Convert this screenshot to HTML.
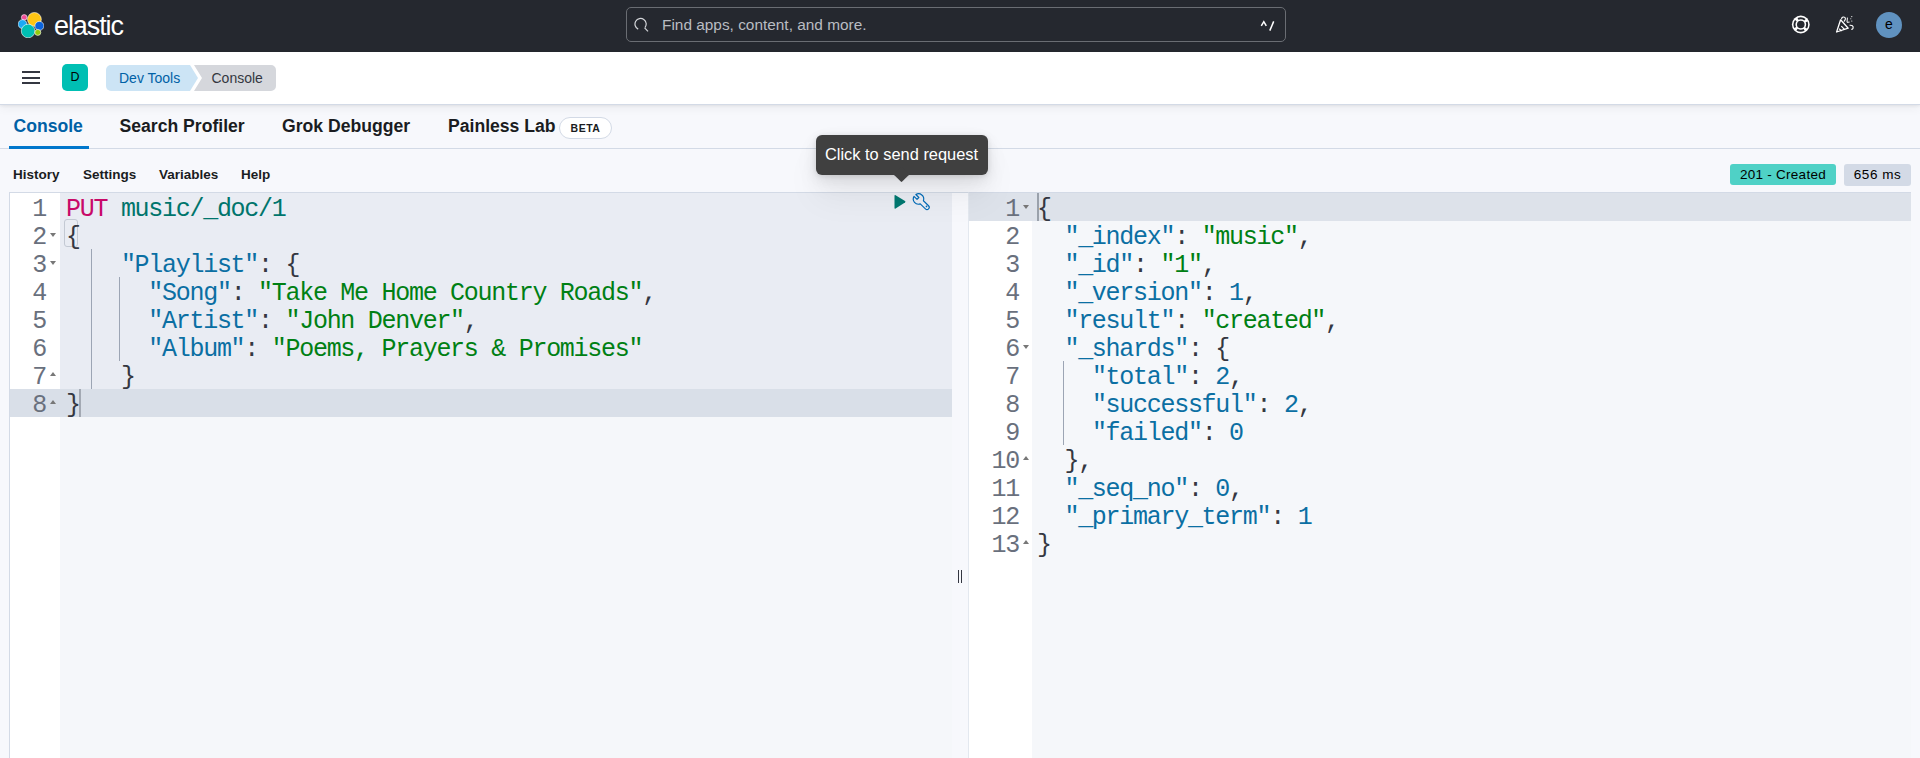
<!DOCTYPE html>
<html><head><meta charset="utf-8">
<style>
*{box-sizing:border-box;margin:0;padding:0}
html,body{width:1920px;height:758px;overflow:hidden;background:#f7f8fc;font-family:"Liberation Sans",sans-serif;}
.abs{position:absolute}
#hdr{position:absolute;left:0;top:0;width:1920px;height:52px;background:#25282f}
#bc{position:absolute;left:0;top:52px;width:1920px;height:53px;background:#fff;border-bottom:1px solid #d3dae6;box-shadow:0 1px 3px rgba(0,0,0,.07),0 4px 9px rgba(0,0,0,.045)}
.txt{position:absolute;white-space:pre;line-height:1}
.mono{font-family:"Liberation Mono",monospace}
.ed{position:absolute;overflow:hidden}
.ln{position:absolute;left:0;height:28px;white-space:pre;font-family:"Liberation Mono",monospace;font-size:25px;letter-spacing:-1.285px;line-height:28px}
.gn{position:absolute;height:28px;text-align:right;font-family:"Liberation Mono",monospace;font-size:25px;letter-spacing:-1.285px;line-height:28px;color:#69707d}
.k{color:#0b6fa3}.s{color:#008013}.p{color:#343741}.m{color:#c80a68}.u{color:#00756c}.n{color:#0b6fa3}
.fold{position:absolute;width:0;height:0;border-left:3px solid transparent;border-right:3px solid transparent}
.fd{border-top:4px solid #777}
.fu{border-bottom:4px solid #777}
</style></head><body>

<!-- HEADER -->
<div id="hdr">
  <svg class="abs" style="left:18px;top:12px" width="26" height="26" viewBox="0 0 26 26">
    <circle cx="16.4" cy="7.4" r="6.9" fill="#fec514" stroke="#fff" stroke-width="0.6"/>
    <circle cx="6.2" cy="5.4" r="2.8" fill="#f04e98" stroke="#fff" stroke-width="0.6"/>
    <circle cx="4.5" cy="12.1" r="4.4" fill="#1ba9f5" stroke="#fff" stroke-width="0.6"/>
    <circle cx="21.4" cy="13.9" r="4.5" fill="#0b64dd" stroke="#fff" stroke-width="0.6"/>
    <circle cx="10.1" cy="19" r="6.8" fill="#00bfb3" stroke="#fff" stroke-width="0.6"/>
    <circle cx="19.8" cy="20.4" r="3" fill="#93c90e" stroke="#fff" stroke-width="0.6"/>
  </svg>
  <div class="txt" style="left:54px;top:12.6px;font-size:27px;color:#fff;letter-spacing:-1.1px">elastic</div>

  <div class="abs" style="left:626px;top:7px;width:660px;height:35px;border:1px solid #6a6d73;border-radius:5px"></div>
  <svg class="abs" style="left:634px;top:17px" width="16" height="16" viewBox="0 0 16 16">
    <path d="M4.2 12.1 A5.6 5.6 0 1 1 10.9 10.6" fill="none" stroke="#d4d6da" stroke-width="1.2"/>
    <line x1="10.6" y1="10.9" x2="14" y2="14.3" stroke="#d4d6da" stroke-width="1.2"/>
  </svg>
  <div class="txt" style="left:662px;top:16.5px;font-size:15.4px;color:#b9bcc2">Find apps, content, and more.</div>
  <svg class="abs" style="left:1258px;top:18px" width="20" height="16" viewBox="0 0 20 16">
    <path d="M3.3 7.8 L5.8 3.6 L8.3 7.8" fill="none" stroke="#fff" stroke-width="1.5" stroke-linejoin="miter"/>
    <path d="M11.8 12.6 L15.7 3.4" stroke="#fff" stroke-width="1.5"/>
  </svg>

  <svg class="abs" style="left:1791px;top:15px" width="20" height="20" viewBox="0 0 20 20">
    <circle cx="9.8" cy="9.5" r="8.9" fill="#fff"/>
    <circle cx="9.8" cy="9.5" r="3.8" fill="#25282f"/>
    <circle cx="9.8" cy="9.5" r="6.35" fill="none" stroke="#25282f" stroke-width="2" stroke-dasharray="7.4 2.57" stroke-dashoffset="3.7"/>
    <circle cx="9.8" cy="9.5" r="7.7" fill="#fff" fill-opacity="0" />
  </svg>
  <svg class="abs" style="left:1835px;top:15px" width="20" height="20" viewBox="0 0 20 20">
    <path d="M1.6 17 L5.6 4.8 L13.2 13.2 Z" fill="none" stroke="#fff" stroke-width="1.3" stroke-linejoin="round"/>
    <path d="M4.2 13.8 L6.6 16 M6.3 11.2 L9.5 14.4" stroke="#fff" stroke-width="1.2"/>
    <path d="M6.6 4.3 C6.4 1.5 10.4 1.3 10.4 3.8 C10.4 5 9.4 5.4 9.1 6.6" fill="none" stroke="#fff" stroke-width="1.1"/>
    <path d="M14.6 10.4 C16.8 9.8 18.6 11.2 18.1 13 C17.8 14.1 16.9 14.4 16.3 14.3" fill="none" stroke="#fff" stroke-width="1.1"/>
    <path d="M12.4 2.6 L12 7.3 L14.6 7.1" fill="none" stroke="#fff" stroke-width="1"/>
    <circle cx="16.8" cy="1.6" r="0.6" fill="#fff"/><circle cx="15.8" cy="3.8" r="0.5" fill="#fff"/><circle cx="16.8" cy="6" r="0.6" fill="#fff"/>
  </svg>
  <div class="abs" style="left:1876px;top:12px;width:26px;height:26px;border-radius:50%;background:#6092c0"></div>
  <div class="txt" style="left:1876px;top:17px;width:26px;text-align:center;font-size:14px;color:#000">e</div>
</div>

<!-- BREADCRUMB BAR -->
<div id="bc">
  <div class="abs" style="left:22px;top:19px;width:18px;height:2px;background:#343741"></div>
  <div class="abs" style="left:22px;top:25px;width:18px;height:2px;background:#343741"></div>
  <div class="abs" style="left:22px;top:30px;width:18px;height:2px;background:#343741"></div>
  <div class="abs" style="left:62px;top:12px;width:26px;height:27px;border-radius:5px;background:#00bfb3"></div>
  <div class="txt" style="left:62px;top:19px;width:26px;text-align:center;font-size:12.5px;color:#000">D</div>
  <svg class="abs" style="left:106px;top:13px" width="172" height="26" viewBox="0 0 172 26">
    <path d="M5 0 H84 L92 13 L84 26 H5 A5 5 0 0 1 0 21 V5 A5 5 0 0 1 5 0 Z" fill="#cce4f5"/>
    <path d="M88 0 H165 A5 5 0 0 1 170 5 V21 A5 5 0 0 1 165 26 H88 L96 13 Z" fill="#d5d7dc"/>
  </svg>
  <div class="txt" style="left:119px;top:19px;font-size:14px;color:#0061a6">Dev Tools</div>
  <div class="txt" style="left:211.5px;top:19px;font-size:14px;color:#343741">Console</div>
</div>

<!-- TABS -->
<div class="abs" style="left:0;top:148px;width:1920px;height:1px;background:#d3dae6"></div>
<div class="txt" style="left:13.5px;top:118px;font-size:17.6px;font-weight:bold;color:#0061a6">Console</div>
<div class="abs" style="left:9px;top:146px;width:80px;height:3px;background:#0077cc"></div>
<div class="txt" style="left:119.5px;top:118px;font-size:17.6px;font-weight:bold;color:#1a1c21">Search Profiler</div>
<div class="txt" style="left:282px;top:118px;font-size:17.6px;font-weight:bold;color:#1a1c21">Grok Debugger</div>
<div class="txt" style="left:448px;top:118px;font-size:17.6px;font-weight:bold;color:#1a1c21">Painless Lab</div>
<div class="abs" style="left:559px;top:117px;width:53px;height:22px;border:1px solid #d3dae6;border-radius:11px;background:#fff"></div>
<div class="txt" style="left:559px;top:123px;width:53px;text-align:center;font-size:10.5px;font-weight:bold;color:#1a1c21;letter-spacing:0.5px">BETA</div>

<!-- TOOLBAR -->
<div class="txt" style="left:13px;top:168px;font-size:13.5px;font-weight:bold;color:#1a1c21">History</div>
<div class="txt" style="left:83px;top:168px;font-size:13.5px;font-weight:bold;color:#1a1c21">Settings</div>
<div class="txt" style="left:159px;top:168px;font-size:13.5px;font-weight:bold;color:#1a1c21">Variables</div>
<div class="txt" style="left:241px;top:168px;font-size:13.5px;font-weight:bold;color:#1a1c21">Help</div>

<div class="abs" style="left:1730px;top:164px;width:106px;height:21px;border-radius:3px;background:#4fd1c6"></div>
<div class="txt" style="left:1730px;top:168px;width:106px;text-align:center;font-size:13.5px;letter-spacing:0.25px;color:#000">201 - Created</div>
<div class="abs" style="left:1844px;top:164px;width:67px;height:22px;border-radius:3px;background:#d3dae6"></div>
<div class="txt" style="left:1844px;top:168px;width:67px;text-align:center;font-size:13.5px;letter-spacing:0.5px;color:#000">656 ms</div>

<!-- LEFT EDITOR -->
<div class="abs" style="left:9px;top:192px;width:943px;height:566px;border-top:1px solid #d3dae6;border-left:1px solid #d3dae6;background:#f5f7fa"></div>
<div class="abs" style="left:10px;top:193px;width:50px;height:565px;background:#fff"></div>
<div class="abs" style="left:60px;top:193px;width:892px;height:196px;background:#e9ecf3"></div>
<div class="abs" style="left:10px;top:389px;width:942px;height:28px;background:#d9dfe8"></div>

<div class="abs" style="left:9px;top:192px;width:1902px;height:1px;background:#d3dae6"></div>
<!-- RIGHT EDITOR -->
<div class="abs" style="left:968px;top:192px;width:943px;height:566px;border-top:1px solid #d3dae6;border-left:1px solid #e3e8ef;background:#f5f7fa"></div>
<div class="abs" style="left:969px;top:193px;width:63px;height:565px;background:#fff"></div>
<div class="abs" style="left:969px;top:193px;width:942px;height:28px;background:#dde2ea"></div>

<!--CODE-->
<div class="gn" style="left:10px;width:36px;top:195.5px">1</div>
<div class="gn" style="left:10px;width:36px;top:223.5px">2</div>
<div class="gn" style="left:10px;width:36px;top:251.5px">3</div>
<div class="gn" style="left:10px;width:36px;top:279.5px">4</div>
<div class="gn" style="left:10px;width:36px;top:307.5px">5</div>
<div class="gn" style="left:10px;width:36px;top:335.5px">6</div>
<div class="gn" style="left:10px;width:36px;top:363.5px">7</div>
<div class="gn" style="left:10px;width:36px;top:391.5px">8</div>
<div class="gn" style="left:969px;width:50px;top:195.5px">1</div>
<div class="gn" style="left:969px;width:50px;top:223.5px">2</div>
<div class="gn" style="left:969px;width:50px;top:251.5px">3</div>
<div class="gn" style="left:969px;width:50px;top:279.5px">4</div>
<div class="gn" style="left:969px;width:50px;top:307.5px">5</div>
<div class="gn" style="left:969px;width:50px;top:335.5px">6</div>
<div class="gn" style="left:969px;width:50px;top:363.5px">7</div>
<div class="gn" style="left:969px;width:50px;top:391.5px">8</div>
<div class="gn" style="left:969px;width:50px;top:419.5px">9</div>
<div class="gn" style="left:969px;width:50px;top:447.5px">10</div>
<div class="gn" style="left:969px;width:50px;top:475.5px">11</div>
<div class="gn" style="left:969px;width:50px;top:503.5px">12</div>
<div class="gn" style="left:969px;width:50px;top:531.5px">13</div>
<div class="fold fd" style="left:50px;top:233px"></div>
<div class="fold fd" style="left:50px;top:261px"></div>
<div class="fold fu" style="left:50px;top:372px"></div>
<div class="fold fu" style="left:50px;top:400px"></div>
<div class="fold fd" style="left:1023px;top:205px"></div>
<div class="fold fd" style="left:1023px;top:345px"></div>
<div class="fold fu" style="left:1023px;top:456px"></div>
<div class="fold fu" style="left:1023px;top:540px"></div>
<div class="abs" style="left:91px;top:249px;width:1px;height:140px;background:#9ca5b4"></div>
<div class="abs" style="left:119px;top:277px;width:1px;height:84px;background:#9ca5b4"></div>
<div class="abs" style="left:1063px;top:361px;width:1px;height:84px;background:#9ca5b4"></div>
<div class="abs" style="left:64px;top:219px;width:14px;height:28px;border:1px solid #c3c9d3;border-radius:3px"></div>
<div class="abs" style="left:79px;top:389px;width:2px;height:28px;background:#a3a9b3"></div>
<div class="abs" style="left:1037px;top:193px;width:2px;height:28px;background:#9aa1ab"></div>
<div class="ln" style="left:66px;top:196px"><span class="m">PUT</span> <span class="u">music/_doc/1</span></div>
<div class="ln" style="left:66px;top:224px"><span class="p">{</span></div>
<div class="ln" style="left:66px;top:252px">    <span class="k">"Playlist"</span><span class="p">: {</span></div>
<div class="ln" style="left:66px;top:280px">      <span class="k">"Song"</span><span class="p">: </span><span class="s">"Take Me Home Country Roads"</span><span class="p">,</span></div>
<div class="ln" style="left:66px;top:308px">      <span class="k">"Artist"</span><span class="p">: </span><span class="s">"John Denver"</span><span class="p">,</span></div>
<div class="ln" style="left:66px;top:336px">      <span class="k">"Album"</span><span class="p">: </span><span class="s">"Poems, Prayers &amp; Promises"</span></div>
<div class="ln" style="left:66px;top:364px">    <span class="p">}</span></div>
<div class="ln" style="left:66px;top:392px"><span class="p">}</span></div>
<div class="ln" style="left:1037px;top:196px"><span class="p">{</span></div>
<div class="ln" style="left:1037px;top:224px">  <span class="k">"_index"</span><span class="p">: </span><span class="s">"music"</span><span class="p">,</span></div>
<div class="ln" style="left:1037px;top:252px">  <span class="k">"_id"</span><span class="p">: </span><span class="s">"1"</span><span class="p">,</span></div>
<div class="ln" style="left:1037px;top:280px">  <span class="k">"_version"</span><span class="p">: </span><span class="n">1</span><span class="p">,</span></div>
<div class="ln" style="left:1037px;top:308px">  <span class="k">"result"</span><span class="p">: </span><span class="s">"created"</span><span class="p">,</span></div>
<div class="ln" style="left:1037px;top:336px">  <span class="k">"_shards"</span><span class="p">: {</span></div>
<div class="ln" style="left:1037px;top:364px">    <span class="k">"total"</span><span class="p">: </span><span class="n">2</span><span class="p">,</span></div>
<div class="ln" style="left:1037px;top:392px">    <span class="k">"successful"</span><span class="p">: </span><span class="n">2</span><span class="p">,</span></div>
<div class="ln" style="left:1037px;top:420px">    <span class="k">"failed"</span><span class="p">: </span><span class="n">0</span></div>
<div class="ln" style="left:1037px;top:448px">  <span class="p">},</span></div>
<div class="ln" style="left:1037px;top:476px">  <span class="k">"_seq_no"</span><span class="p">: </span><span class="n">0</span><span class="p">,</span></div>
<div class="ln" style="left:1037px;top:504px">  <span class="k">"_primary_term"</span><span class="p">: </span><span class="n">1</span></div>
<div class="ln" style="left:1037px;top:532px"><span class="p">}</span></div>
<!--/CODE-->

<!-- ICONS -->
<svg class="abs" style="left:893px;top:194px" width="14" height="16" viewBox="0 0 14 16">
  <path d="M1.5 1.8 Q1.5 0.6 2.6 1.2 L12 7.1 Q13 7.8 12 8.5 L2.6 14.6 Q1.5 15.2 1.5 14 Z" fill="#007871"/>
</svg>
<svg class="abs" style="left:908px;top:190px" width="26" height="24" viewBox="0 0 26 24">
  <path d="M7.86 4.52 L10.85 7.51 L9.01 9.35 L6.02 6.36 A5.2 5.2 0 0 0 12.27 13.89 L17.44 18.86 A2.2 2.2 0 0 0 20.56 15.74 L15.39 10.77 A5.2 5.2 0 0 0 7.86 4.52 Z" fill="none" stroke="#006bb8" stroke-width="1.15" stroke-linejoin="round"/>
  <circle cx="18.5" cy="16.4" r="0.85" fill="#006bb8"/>
</svg>
<!-- resize handle -->
<div class="abs" style="left:958px;top:570px;width:1px;height:13px;background:#343741"></div>
<div class="abs" style="left:961px;top:570px;width:1px;height:13px;background:#343741"></div>
<!-- TOOLTIP -->
<div class="abs" style="left:816px;top:135px;width:172px;height:40px;background:#404040;border-radius:6px;box-shadow:0 1px 5px rgba(0,0,0,.1),0 3.6px 13px rgba(0,0,0,.07),0 8.4px 23px rgba(0,0,0,.06),0 23px 35px rgba(0,0,0,.05)"></div>
<div class="abs" style="left:896px;top:169px;width:11px;height:11px;background:#404040;transform:rotate(45deg);border-radius:1px"></div>
<div class="txt" style="left:825px;top:146px;font-size:16.4px;color:#fff">Click to send request</div>
</body></html>
